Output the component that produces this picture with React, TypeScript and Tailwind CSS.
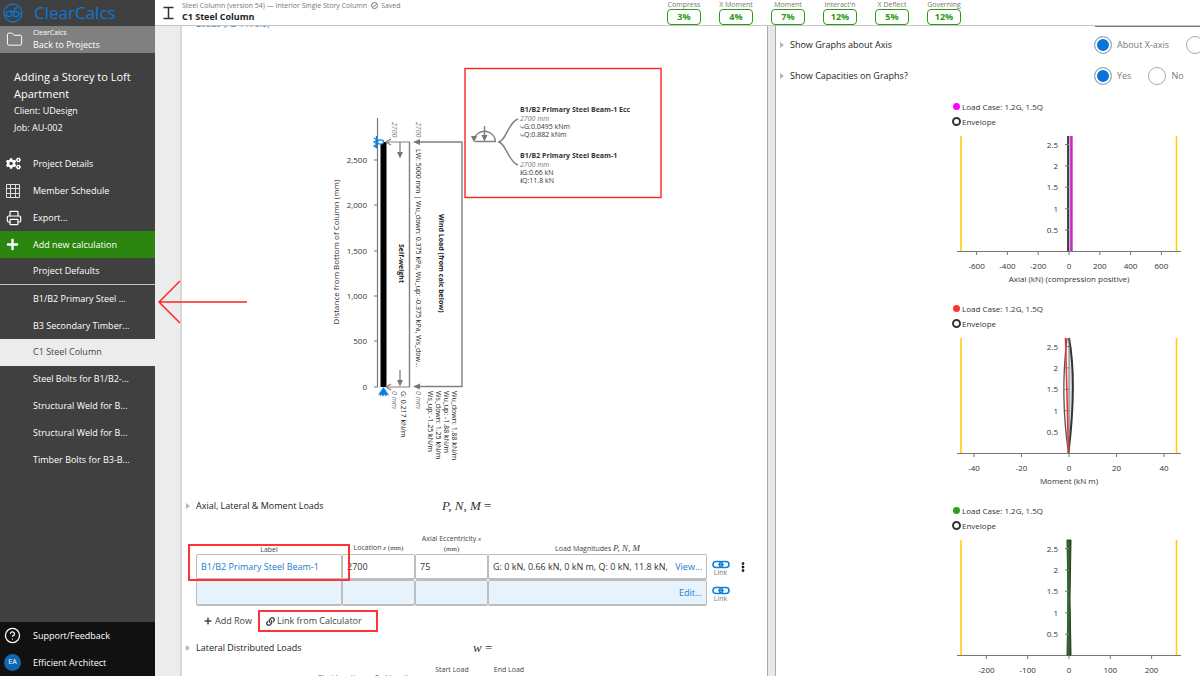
import React, { useState } from 'react';
import { FaCogs, FaLink, FaPlus } from 'react-icons/fa';
import { CircleHelp, Folder, Printer, EllipsisVertical } from 'lucide-react';

interface Metric {
  label: string;
  value: string;
}

interface ChartProps {
  color: string;
  title: string;
  step: number;
  spacing: number;
  count: number;
  children: React.ReactNode;
}

const METRICS: Metric[] = [
  { label: 'Compress', value: '3%' },
  { label: 'X Moment', value: '4%' },
  { label: 'Moment', value: '7%' },
  { label: "Interact'n", value: '12%' },
  { label: 'X Deflect', value: '5%' },
  { label: 'Governing', value: '12%' },
];

const CALCULATIONS = [
  'B1/B2 Primary Steel ...',
  'B3 Secondary Timber...',
  'C1 Steel Column',
  'Steel Bolts for B1/B2-...',
  'Structural Weld for B...',
  'Structural Weld for B...',
  'Timber Bolts for B3-B...',
];

const HEIGHT_TICKS = [
  { label: '2,500', y: 160 },
  { label: '2,000', y: 205 },
  { label: '1,500', y: 251 },
  { label: '1,000', y: 296 },
  { label: '500', y: 341 },
  { label: '0', y: 387 },
];

const Logo: React.FC = () => (
  <svg width="20" height="20" viewBox="0 0 20 20" fill="none" stroke="#0a78d4" strokeWidth="1.3">
    <circle cx="10" cy="10" r="9" />
    <circle cx="6" cy="11" r="2.7" />
    <path d="M6 8.3h4" />
    <circle cx="13" cy="11" r="2.7" />
    <path d="M10.4 11c0-4 1-6 4.200-6.500M15.700 11c1 0 1.600-.5 2-1.500" />
  </svg>
);

const LinkGlyph: React.FC = () => (
  <svg width="18" height="9" viewBox="0 0 18 9" fill="none" stroke="#1180d8" strokeWidth="1.6">
    <rect x="1" y="1.500" width="9.500" height="6" rx="3" />
    <rect x="7.500" y="1.500" width="9.500" height="6" rx="3" />
    <path d="M6 4.500h6" strokeWidth="1" />
  </svg>
);

const Expander: React.FC<{ label: string }> = ({ label }) => (
  <button className="flex items-center gap-[6px] text-left text-[#222]">
    <svg width="4" height="6" viewBox="0 0 4 6" fill="#b5b5b5">
      <path d="M0 0l4 3-4 3z" />
    </svg>
    {label}
  </button>
);

const Sidebar: React.FC = () => {
  const [active, setActive] = useState(2);
  const item = 'flex h-[27px] w-full items-center text-left';
  const slot = 'flex w-[33px] shrink-0 pl-[6px]';

  return (
    <aside className="flex w-[155px] shrink-0 flex-col bg-[#404040] text-[9px] font-medium text-white">
      <div className="flex h-[26px] shrink-0 items-center gap-[11px] pl-[3px] text-[17px] font-normal text-[#0a78d4]">
        <Logo />
        ClearCalcs
      </div>
      <a href="#projects" className="flex h-[27px] shrink-0 items-center bg-[#808080]">
        <span className={slot}><Folder size={17} strokeWidth={1.4} /></span>
        <span className="flex flex-col">
          <span className="text-[7px] leading-[10px]">ClearCalcs</span>
          <span className="leading-[13px]">Back to Projects</span>
        </span>
      </a>
      <div className="px-[14px] pt-[15px] pb-[14px] leading-[17px]">
        <h1 className="text-[11px]">Adding a Storey to Loft Apartment</h1>
        <p>Client: UDesign</p>
        <p>Job: AU-002</p>
      </div>
      <nav>
        <button className={item}><span className={slot}><FaCogs size={15} /></span>Project Details</button>
        <button className={item}>
          <span className={slot}>
            <svg width="14" height="14" viewBox="0 0 14 14" fill="none" stroke="#ddd">
              <path d="M.5.5h13v13H.5zM.5 4.500h13M.5 9.500h13M4.500.5v13M9.500.5v13" />
            </svg>
          </span>
          Member Schedule
        </button>
        <button className={item}><span className={slot}><Printer size={16} strokeWidth={1.8} /></span>Export...</button>
        <button className={`${item} bg-[#2a860e]`}><span className={slot}><FaPlus size={13} /></span>Add new calculation</button>
        <button className={`${item} border-b border-[#c0c0c0]`}><span className={slot} />Project Defaults</button>
        <div className="grid h-[188px] auto-rows-fr">
          {CALCULATIONS.map((name, i) => (
            <button
              key={i}
              onClick={() => setActive(i)}
              className={`pl-[33px] text-left ${active === i ? 'bg-[#ececec] font-normal text-[#444]' : ''}`}
            >
              {name}
            </button>
          ))}
        </div>
      </nav>
      <div className="mt-auto bg-[#111]">
        <button className={item}>
          <span className="w-[33px] pl-[4px]"><CircleHelp size={17} strokeWidth={1.8} /></span>
          Support/Feedback
        </button>
        <button className={item}>
          <span className="w-[33px] pl-[4px]">
            <span className="flex size-[17px] items-center justify-center rounded-full bg-[#1266ac] text-[7px]">EA</span>
          </span>
          Efficient Architect
        </button>
      </div>
    </aside>
  );
};

const Header: React.FC = () => (
  <header className="relative z-10 flex h-[26px] shrink-0 items-start border-b border-[#c4c4c4] bg-white text-[7px] text-[#777]">
    <div className="flex w-[503px] gap-[8px] pt-px pl-[8px]">
      <svg className="mt-[5px]" width="11" height="14" viewBox="0 0 11 14" fill="none" stroke="#333" strokeWidth="1.5">
        <path d="M.5 1.500h10M.5 12.500h10M5.500 1v12" />
      </svg>
      <div>
        <p className="flex items-center leading-[9px]">
          Steel Column (version 54) — Interior Single Story Column
          <svg className="mr-[3px] ml-[4px]" width="7" height="7" viewBox="0 0 7 7" fill="none" stroke="#777">
            <circle cx="3.500" cy="3.500" r="3" />
            <path d="M2 3.500l1.200 1.200L5.300 2.400" />
          </svg>
          Saved
        </p>
        <h2 className="text-[9px] leading-[14px] font-bold text-[#222]">C1 Steel Column</h2>
      </div>
    </div>
    <dl className="flex">
      {METRICS.map((m) => (
        <div key={m.label} className="flex w-[52px] flex-col items-center">
          <dt className="leading-[9px]">{m.label}</dt>
          <dd className="flex h-[16px] w-[34px] items-center justify-center rounded-[4px] border border-[#2a9c10] text-[9px] font-bold text-[#2a9c10]">
            {m.value}
          </dd>
        </div>
      ))}
    </dl>
  </header>
);

/* Text running down the column, x is the centre line and y the start */
const Down: React.FC<{ x: number; y: number; children: string; variant?: 'bold' | 'dim' }> = ({ x, y, children, variant }) => (
  <text
    transform={`translate(${x - 3} ${y}) rotate(90)`}
    className="text-[7px]"
    fontWeight={variant === 'bold' ? 700 : 400}
    fontStyle={variant === 'dim' ? 'italic' : 'normal'}
    fill={variant === 'dim' ? '#777' : '#222'}
  >
    {children}
  </text>
);

const ColumnDiagram: React.FC = () => (
  <svg className="block text-[8px]" width="480" height="425" viewBox="196 60 480 425" fill="#333">
    <path d="M377.500 118v269" stroke="#777" strokeWidth="1.2" />
    {HEIGHT_TICKS.map((t) => (
      <g key={t.label}>
        <path d={`M374 ${t.y}h4`} stroke="#777" />
        <text x="367" y={t.y + 3} textAnchor="end">{t.label}</text>
      </g>
    ))}
    <text transform="translate(339 252) rotate(-90)" textAnchor="middle">Distance from Bottom of Column (mm)</text>

    <rect x="380.500" y="142" width="6" height="245" fill="#000" />
    <g fill="none" stroke="#0a7de0" strokeWidth="1.2">
      <path d="M376.500 136v12M374 138l3 2-3 2 3 2-3 2 3 2" />
      <ellipse cx="380.500" cy="142" rx="3" ry="2.200" fill="#fff" />
    </g>
    <path d="M383.500 387l4 6 2 3-2.500-1.500-1 2-1.500-2-1.500 2-1.500-2-1.500 2-.5-2.500-1.500 1z" fill="#0a7de0" />

    <g stroke="#808080" fill="none">
      <path d="M386 142h24M386 387h24" strokeWidth="1" />
      <path d="M409.500 142v245M462 142v245M417 142h45.500M417 386.500h45.500" strokeWidth="1.4" />
      <path d="M400 142v12M400 370v12M391 139l-5 3 5 3M391 384l-5 3 5 3" strokeWidth="1.3" />
    </g>
    <path d="M397 152h6l-3 6.500zM397 380h6l-3 6.500zM413 142l7-3v6zM413 386.500l7-3v6z" fill="#777" />

    <Down x={395} y={122} variant="dim">2700</Down>
    <Down x={419} y={122} variant="dim">2700</Down>
    <Down x={402} y={244} variant="bold">Self-weight</Down>
    <Down x={419} y={149}>LW: 5000 mm | Wu_down: 0.375 kPa, Wu_up: -0.375 kPa, Ws_dow...</Down>
    <Down x={442} y={214} variant="bold">Wind Load (from calc below)</Down>
    <Down x={395} y={391} variant="dim">0 mm</Down>
    <Down x={404} y={391}>G: 0.217 kN/m</Down>
    <Down x={419} y={391} variant="dim">0 mm</Down>
    <Down x={431} y={391}>Ws_up: -1.25 kN/m</Down>
    <Down x={439} y={391}>Ws_down: 1.25 kN/m</Down>
    <Down x={447} y={391}>Wu_up: -1.88 kN/m</Down>
    <Down x={455} y={391}>Wu_down: 1.88 kN/m</Down>

    {/* end load and moment callout */}
    <g stroke="#808080" fill="none" strokeWidth="1.4">
      <path d="M475 141.500h21M474 139a11 11 0 0 1 21.500 2.500M484.500 126v10" />
      <path d="M498 142c8 0 10-20 20-23M498 142c8 0 10 20 20 23" />
    </g>
    <path d="M471 136h6l-3 6.500zM481.500 135h6l-3 6.500z" fill="#777" />
    <g className="text-[7px]">
      <text x="520" y="112" fontWeight="700">B1/B2 Primary Steel Beam-1 Ecc</text>
      <text x="520" y="121" fontStyle="italic" fill="#777">2700 mm</text>
      <text x="520" y="129">⤷G:0.0495 kNm</text>
      <text x="520" y="137">⤷Q:0.882 kNm</text>
      <text x="520" y="158" fontWeight="700">B1/B2 Primary Steel Beam-1</text>
      <text x="520" y="167" fontStyle="italic" fill="#777">2700 mm</text>
      <text x="520" y="175">⭳G:0.66 kN</text>
      <text x="520" y="183">⭳Q:11.8 kN</text>
    </g>
    <rect x="465" y="68.500" width="196" height="129" fill="none" stroke="#f22" strokeWidth="1.4" />
  </svg>
);

const MATH = "font-['Liberation_Serif',serif] italic";
const CELL = 'block h-[26px] w-full rounded-[2px] border border-b-2 border-[#bdbdbd] px-[4px] outline-none';

const LoadsTable: React.FC = () => {
  const [label, setLabel] = useState('B1/B2 Primary Steel Beam-1');
  const [location, setLocation] = useState('2700');
  const [ecc, setEcc] = useState('75');

  return (
    <table className="w-[560px] table-fixed border-collapse">
      <thead className="text-[7px] text-[#444]">
        <tr className="h-[23px]">
          <th className="w-[146px] p-0 align-bottom leading-[9px] font-normal">Label</th>
          <th className="w-[73px] p-0 pb-px align-bottom leading-[9px] font-normal">
            Location <span className={MATH}>z</span> <span className="font-['Liberation_Serif',serif]">(mm)</span>
          </th>
          <th className="w-[73px] p-0 align-bottom leading-[10px] font-normal">
            Axial Eccentricity <span className={MATH}>x</span> <span className="font-['Liberation_Serif',serif]">(mm)</span>
          </th>
          <th className="w-[219px] p-0 pb-px align-bottom leading-[9px] font-normal">
            Load Magnitudes <span className={`${MATH} text-[9px]`}>P, N, M</span>
          </th>
          <th className="w-[27px] p-0" />
          <th className="p-0" />
        </tr>
      </thead>
      <tbody>
        <tr>
          <td className="p-0">
            <input aria-label="Label" value={label} onChange={(e) => setLabel(e.target.value)} className={`${CELL} bg-white text-[#1a7bcc]`} />
          </td>
          <td className="p-0">
            <input aria-label="Location z (mm)" value={location} onChange={(e) => setLocation(e.target.value)} className={`${CELL} bg-white`} />
          </td>
          <td className="p-0">
            <input aria-label="Axial Eccentricity x (mm)" value={ecc} onChange={(e) => setEcc(e.target.value)} className={`${CELL} bg-white`} />
          </td>
          <td className="p-0">
            <div className="flex h-[26px] items-center justify-between rounded-[2px] border border-b-2 border-[#bdbdbd] bg-white px-[4px]">
              <span className="whitespace-nowrap">G: 0 kN, 0.66 kN, 0 kN m, Q: 0 kN, 11.8 kN,</span>
              <button className="text-[#1a7bcc]">View...</button>
            </div>
          </td>
          <td className="p-0">
            <button className="flex w-full flex-col items-center pt-[2px] text-[7px] leading-[8px] text-[#777]"><LinkGlyph />Link</button>
          </td>
          <td className="p-0">
            <button className="flex pl-[3px] text-black" aria-label="Row menu"><EllipsisVertical size={12} strokeWidth={3.5} /></button>
          </td>
        </tr>
        <tr>
          <td className="p-0"><input aria-label="Label" className={`${CELL} bg-[#e6f3fd]`} /></td>
          <td className="p-0"><input aria-label="Location z (mm)" className={`${CELL} bg-[#e6f3fd]`} /></td>
          <td className="p-0"><input aria-label="Axial Eccentricity x (mm)" className={`${CELL} bg-[#e6f3fd]`} /></td>
          <td className="p-0">
            <div className="flex h-[26px] items-center justify-end rounded-[2px] border border-b-2 border-[#bdbdbd] bg-[#e6f3fd] px-[4px]">
              <button className="text-[#1a7bcc]">Edit...</button>
            </div>
          </td>
          <td className="p-0">
            <button className="flex w-full flex-col items-center pt-[2px] text-[7px] leading-[8px] text-[#777]"><LinkGlyph />Link</button>
          </td>
          <td className="p-0" />
        </tr>
      </tbody>
    </table>
  );
};

const Chart: React.FC<ChartProps> = ({ color, title, step, spacing, count, children }) => {
  const ticks = Array.from({ length: count * 2 + 1 }, (_, i) => i - count);

  return (
    <section className="h-[202px] w-[240px] shrink-0 text-[8px] text-[#333]">
      <p className="flex h-[15px] items-center gap-[2px] pl-px">
        <span className="size-[7px] rounded-full" style={{ backgroundColor: color }} />
        Load Case: 1.2G, 1.5Q
      </p>
      <p className="flex h-[15px] items-center gap-px">
        <span className="size-[9px] rounded-full border-2 border-[#333]" />
        Envelope
      </p>
      <svg className="block" width="240" height="160" viewBox="0 0 240 160" fill="#333">
        <path d="M9 7v115M224.500 7v115" stroke="#fc1" strokeWidth="1.6" />
        <path d="M5 122.500h224" stroke="#777" />
        {ticks.map((n) => (
          <g key={n}>
            <path d={`M${117 + n * spacing} 122v4`} stroke="#777" />
            <text x={117 + n * spacing} y="140" textAnchor="middle">{n * step}</text>
          </g>
        ))}
        {children}
        {[1, 2, 3, 4, 5].map((n) => (
          <g key={n}>
            <path d={`M113 ${122.500 - n * 21.400}h4`} stroke="#777" />
            <text x="106" y={125.500 - n * 21.400} textAnchor="end">{n / 2}</text>
          </g>
        ))}
        <text x="117" y="153" textAnchor="middle">{title}</text>
      </svg>
    </section>
  );
};

const RADIO =
  'size-[18px] shrink-0 appearance-none rounded-full border border-[#aaa] bg-white checked:bg-[#0874d8] checked:shadow-[inset_0_0_0_2px_white]';

const RadioRow: React.FC<{ label: string; name: string; options: string[] }> = ({ label, name, options }) => (
  <div className="flex h-[31px] shrink-0 items-center">
    <div className="w-[314px] shrink-0"><Expander label={label} /></div>
    <div className="flex shrink-0 gap-[17px] text-[#777]">
      {options.map((o, i) => (
        <label key={o} className="flex items-center gap-[5px] whitespace-nowrap">
          <input type="radio" name={name} defaultChecked={i === 0} className={RADIO} />
          {o}
        </label>
      ))}
    </div>
  </div>
);

const App: React.FC = () => {
  return (
    <div className="flex h-screen overflow-hidden bg-white font-['Open_Sans',sans-serif] text-[9px] text-[#333]">
      <Sidebar />
      <div className="relative flex min-w-0 flex-1 flex-col">
        <Header />
        <div className="flex min-h-0 flex-1">
          <div className="w-[27px] shrink-0 border-r-2 border-[#d8d8d8] bg-[#ececec]" />
          <main className="min-w-0 flex-1 overflow-hidden pl-[4px]">
            <a href="#loads" className="-mt-[8px] block h-[42px] pl-[10px] leading-[12px] text-[#1a7bcc]">
              Loads (AS 1170.0)
            </a>
            <div className="pl-[10px]"><ColumnDiagram /></div>
            <div className="flex h-[41px] items-center">
              <div className="w-[256px]"><Expander label="Axial, Lateral & Moment Loads" /></div>
              <span className={`${MATH} text-[13px]`}>P, N, M <span className="not-italic">=</span></span>
            </div>
            <div className="relative mt-[5px] pl-[10px]">
              <LoadsTable />
              <div className="pointer-events-none absolute top-[13px] left-[2px] h-[37px] w-[162px] border-2 border-[#f33]" />
            </div>
            <div className="flex h-[30px] items-center gap-[6px] pl-[18px] text-[#444]">
              <button className="flex items-center gap-[3px]"><FaPlus size={8} />Add Row</button>
              <button className="flex h-[22px] w-[120px] items-center gap-[2px] border-2 border-[#f33] pl-[6px]"><FaLink size={9} />Link from Calculator</button>
            </div>
            <div className="flex h-[24px] items-center">
              <div className="w-[287px]"><Expander label="Lateral Distributed Loads" /></div>
              <span className={`${MATH} text-[13px]`}>w <span className="not-italic">=</span></span>
            </div>
            <div className="mt-[5px] flex items-start pl-[128px] text-center text-[7px] leading-[9px] whitespace-nowrap text-[#444]">
              <span className="w-[54px] pt-[8px]">Start Location</span>
              <span className="w-[56px] pt-[8px]">End Location</span>
              <span className="w-[56px]">Start Load<br />(kPa)</span>
              <span className="w-[58px]">End Load<br />(kPa)</span>
            </div>
          </main>
          <div className="w-[9px] shrink-0 border-x border-[#aaa] bg-[#e8e8e8]" />
          <aside className="flex w-[424px] shrink-0 flex-col overflow-hidden pl-[4px]">
            <div className="ml-[315px] h-[3px] shrink-0 border-t border-[#777]" />
            <RadioRow label="Show Graphs about Axis" name="axis" options={['About X-axis', 'About Y-axis']} />
            <RadioRow label="Show Capacities on Graphs?" name="capacities" options={['Yes', 'No']} />
            <div className="flex flex-col items-end pt-[8px] pr-[8px]">
              <Chart color="#f0f" title="Axial (kN) (compression positive)" step={200} spacing={30.8} count={3}>
                <path d="M116 7v115h3.500V7z" fill="#bbb" />
                <path d="M116 7v115" stroke="#333" strokeWidth="1.8" />
                <path d="M119.500 7v115" stroke="#c2c" strokeWidth="2.400" />
              </Chart>
              <Chart color="#f33" title="Moment (kN m)" step={20} spacing={47.5} count={2}>
                <path d="M116.500 122Q108 64 115 7" fill="none" stroke="#555" strokeWidth="1.3" />
                <path d="M116.500 122Q125 50 117 7" fill="#ddd" stroke="#333" strokeWidth="2" />
                <path d="M117 122V7" stroke="#777" />
                <path d="M116.500 122L113.500 7" stroke="#e33" strokeWidth="1.6" />
              </Chart>
              <Chart color="#2ca01c" title="Shear (kN)" step={100} spacing={41.3} count={2}>
                <path d="M115 7h4l-1 58 1 57h-4l1-57z" fill="#333" stroke="#333" strokeWidth="1" />
                <path d="M116.500 7v115" stroke="#27751a" strokeWidth="2.400" />
              </Chart>
            </div>
          </aside>
        </div>
        {/* arrow marking the calculation to link from */}
        <svg className="pointer-events-none absolute top-[280px] left-[3px]" width="90" height="44" viewBox="0 0 90 44" fill="none" stroke="#f22" strokeWidth="1.5">
          <path d="M89 22H1M22 1L1 22l21 21" />
        </svg>
      </div>
    </div>
  );
};

export default App;
